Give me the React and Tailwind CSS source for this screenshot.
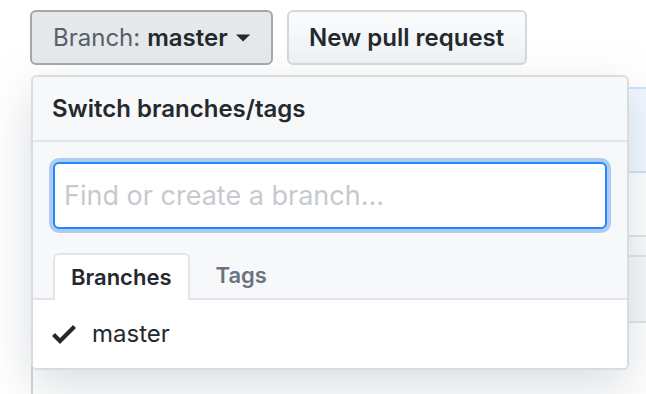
// GitHub branch switcher dropdown, rendered at 2x scale
const Caret = () => (
  <svg width="16" height="20" viewBox="0 0 8 10" className="ml-[8px] fill-[#24292e]">
    <path d="M0 3l4 4 4-4z" />
  </svg>
);

const Check = () => (
  <svg width="24" height="32" viewBox="0 0 12 16" className="fill-[#24292e]">
    <path d="M12 5l-8 8-4-4 1.5-1.5L4 10l6.5-6.5L12 5z" />
  </svg>
);

const App = () => {
  return (
    <div className="relative w-[646px] h-[394px] overflow-hidden bg-white font-['Inter',sans-serif] antialiased">
      <div className="flex gap-[14px] pl-[30px] pt-[10px]">
        <button className="flex items-center h-[55px] w-[243px] px-[21px] rounded-[6px] border-2 border-[#a3a8ad] bg-[#e6e9ec] text-[24px] leading-none">
          <span className="text-[#586069]">Branch:</span>
          <span className="ml-[7px] font-semibold text-[#24292e]">master</span>
          <Caret />
        </button>
        <button className="flex items-center h-[55px] w-[240px] px-[20px] rounded-[6px] border-2 border-[#d5d8db] bg-gradient-to-b from-[#fafbfc] to-[#eff3f6] text-[24px] leading-none font-semibold text-[#24292e]">
          New pull request
        </button>
      </div>

      {/* file list box sitting behind the menu */}
      <div className="ml-[31px] mt-[22px] w-[700px] border-l-2 border-[#d1d5da]">
        <div className="h-[86px] bg-[#f1f8ff] border-y-2 border-[#c8e1ff]" />
        <div className="h-[64px] bg-white border-b-2 border-[#e1e4e8]" />
        <div className="h-[20px] bg-[#fafbfc] border-b-2 border-[#e1e4e8]" />
        <div className="h-[66px] bg-[#f6f8fa] border-b-2 border-[#e1e4e8]" />
        <div className="h-[80px] bg-white" />
      </div>

      <div className="absolute left-[31px] top-[75px] w-[598px] rounded-[6px] border-2 border-[#d8dce0] bg-white overflow-hidden shadow-[0_16px_48px_rgba(149,157,165,0.35)]">
        <div className="h-[65px] flex items-center px-[19px] bg-[#f6f8fa] border-b-2 border-[#e1e4e8] text-[24px] font-semibold text-[#24292e]">
          Switch branches/tags
        </div>
        <div className="bg-[#f6f8fa] px-[20px] pt-[20px] pb-[24px]">
          <input
            placeholder="Find or create a branch..."
            className="w-full h-[67px] rounded-[6px] border-2 border-[#2188ff] bg-white px-[9px] text-[27px] outline-none shadow-[0_0_0_4px_rgba(3,102,214,0.3)] placeholder:text-[#c6cacf]"
          />
        </div>
        <div className="flex items-end h-[47px] px-[20px] bg-[#f6f8fa] border-b-2 border-[#e1e4e8]">
          <div className="h-[47px] -mb-[2px] px-[16px] flex items-center rounded-t-[6px] border-2 border-b-0 border-[#e1e4e8] bg-white text-[22px] font-semibold text-[#24292e]">
            Branches
          </div>
          <div className="h-[45px] ml-[9px] px-[17px] flex items-center text-[22px] font-semibold text-[#6a737d]">
            Tags
          </div>
        </div>
        <div className="h-[68px] flex items-center px-[19px] bg-white">
          <Check />
          <span className="ml-[16px] text-[24px] text-[#24292e]">master</span>
        </div>
      </div>
    </div>
  );
};

export default App;
